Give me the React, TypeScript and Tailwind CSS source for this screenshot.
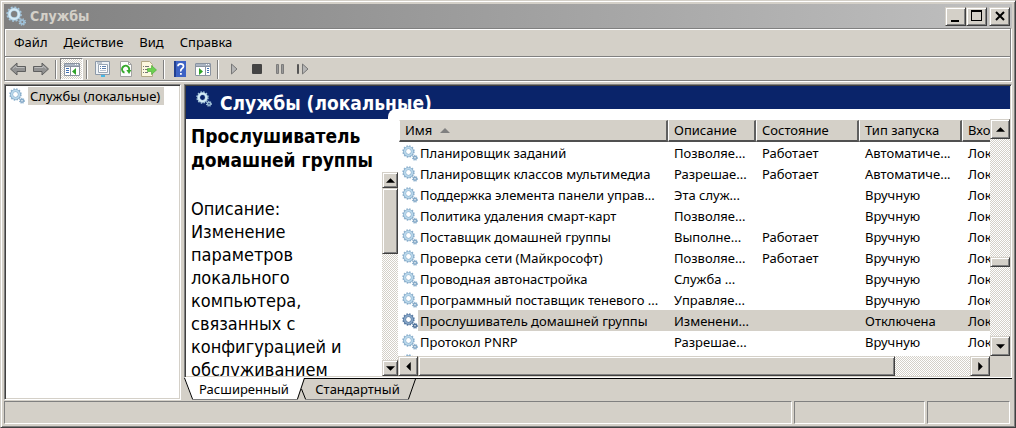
import type { ReactNode } from 'react';
import { clsx } from 'clsx';

interface Service {
  name: string;
  description: string;
  state?: string;
  startup: string;
}

const SERVICES: Service[] = [
  { name: 'Планировщик заданий', description: 'Позволяе...', state: 'Работает', startup: 'Автоматиче...' },
  { name: 'Планировщик классов мультимедиа', description: 'Разрешае...', state: 'Работает', startup: 'Автоматиче...' },
  { name: 'Поддержка элемента панели управ...', description: 'Эта служ...', startup: 'Вручную' },
  { name: 'Политика удаления смарт-карт', description: 'Позволяе...', startup: 'Вручную' },
  { name: 'Поставщик домашней группы', description: 'Выполне...', state: 'Работает', startup: 'Вручную' },
  { name: 'Проверка сети (Майкрософт)', description: 'Позволяе...', state: 'Работает', startup: 'Вручную' },
  { name: 'Проводная автонастройка', description: 'Служба ...', startup: 'Вручную' },
  { name: 'Программный поставщик теневого ...', description: 'Управляе...', startup: 'Вручную' },
  { name: 'Прослушиватель домашней группы', description: 'Изменени...', startup: 'Отключена' },
  { name: 'Протокол PNRP', description: 'Разрешае...', startup: 'Вручную' },
];

const SELECTED = 'Прослушиватель домашней группы';

const RAISED
  = 'bg-[#d4d0c8] border border-t-[#d4d0c8] border-l-[#d4d0c8] border-r-[#404040] border-b-[#404040] shadow-[inset_1px_1px_#fff,inset_-1px_-1px_#808080]';
const SUNKEN
  = 'border border-t-[#808080] border-l-[#808080] border-r-white border-b-white shadow-[inset_1px_1px_#404040,inset_-1px_-1px_#d4d0c8]';
const DITHER
  = 'bg-[repeating-conic-gradient(#fff_0_25%,#d4d0c8_0_50%)] bg-[length:2px_2px]';
const UI_TEXT = "font-['Noto_Sans','DejaVu_Sans_Condensed',sans-serif] text-[13px]";

interface GearsProps {
  className?: string;
  tone?: 'light' | 'dark' | 'pale';
}

const GEAR_TONES = {
  light: { teeth: '#8fb3cf', ring: '#b9d8ec', edge: '#86aac8' },
  dark: { teeth: '#5f82aa', ring: '#86a6c8', edge: '#4f7199' },
  pale: { teeth: '#a9c9de', ring: '#d5ebf6', edge: '#9dbfd6' },
};

function Gears({ className, tone = 'light' }: GearsProps) {
  const { teeth, ring, edge } = GEAR_TONES[tone];
  return (
    <svg viewBox="0 0 16 16" className={clsx('shrink-0', className)} fill="none" aria-hidden="true">
      <circle cx="6.5" cy="6.5" r="5.3" stroke={teeth} strokeWidth="1.8" strokeDasharray="1.5 1.275" />
      <circle cx="6.5" cy="6.5" r="3.9" stroke={edge} strokeWidth="2.9" />
      <circle cx="6.5" cy="6.5" r="3.8" stroke={ring} strokeWidth="1.8" />
      <circle cx="13" cy="12.8" r="2.4" stroke={teeth} strokeWidth="1.2" strokeDasharray="1 0.885" />
      <circle cx="13" cy="12.8" r="1.5" stroke={edge} strokeWidth="1.5" />
    </svg>
  );
}

function Arrow({ direction }: { direction: 'up' | 'down' | 'left' | 'right' }) {
  const paths = {
    up: 'M4 0L8 4H0Z',
    down: 'M0 0H8L4 4Z',
    left: 'M4 0V8L0 4Z',
    right: 'M0 0L4 4L0 8Z',
  };
  const vertical = direction === 'up' || direction === 'down';
  return (
    <svg
      viewBox={vertical ? '0 0 8 4' : '0 0 4 8'}
      className={vertical ? 'h-[5px] w-[9px]' : 'h-[9px] w-[5px]'}
      aria-hidden="true"
    >
      <path d={paths[direction]} fill="#000" />
    </svg>
  );
}

function ScrollButton({ direction, label, small }: { direction: 'up' | 'down' | 'left' | 'right'; label: string; small?: boolean }) {
  return (
    <button
      type="button"
      aria-label={label}
      className={clsx('flex shrink-0 items-center justify-center', small ? 'size-4' : 'size-5', RAISED)}
    >
      <Arrow direction={direction} />
    </button>
  );
}

function ToolButton({ label, active, children }: { label: string; active?: boolean; children: ReactNode }) {
  return (
    <button
      type="button"
      aria-label={label}
      className={clsx(
        'flex h-[22px] w-[23px] items-center justify-center',
        active && 'border border-t-[#808080] border-l-[#808080] border-r-white border-b-white',
        active && DITHER,
      )}
    >
      <svg viewBox="0 0 16 16" className="size-4 shrink-0" fill="none" aria-hidden="true">
        {children}
      </svg>
    </button>
  );
}

function Separator() {
  return <span className="mx-[3px] h-[19px] w-[2px] border-l border-[#808080] bg-white" />;
}

function ConsoleGlyph({ flipped }: { flipped?: boolean }) {
  return (
    <>
      <path d="M0 2h16v13H0z" fill="#fff" />
      <path d="M0.5 2.5h15v12h-15z" stroke="#8a93a0" />
      <path d="M1 3h14v2H1z" fill="#aab4c2" />
      <path d="M11 3h1v1h-1zM13 3h1v1h-1z" fill="#fff" />
      <path d="M1 5.5h14" stroke="#8a93a0" />
      {flipped
        ? (
            <>
              <path d="M10.500 6v8" stroke="#8a93a0" />
              <path d="M12 7.500h2M12 9.500h2M12 11.500h2" stroke="#3f6fb5" />
              <path d="M4 7l4 3.500-4 3.500z" fill="#2fa32a" />
            </>
          )
        : (
            <>
              <path d="M6.500 6v8" stroke="#8a93a0" />
              <path d="M2 7.500h3M2 9.500h3M2 11.500h3" stroke="#3f6fb5" />
              <path d="M12 7l-4 3.500 4 3.500z" fill="#2fa32a" />
            </>
          )}
    </>
  );
}

function Toolbar() {
  return (
    <div role="toolbar" className="flex h-[22px] items-center">
      <ToolButton label="Назад">
        <path d="M0.500 8L7 2V5.500h8.500v5H7V14z" fill="#929292" stroke="#5f5f5f" strokeLinejoin="round" />
        <path d="M3 7.500L6 5v1.500h8.500" stroke="#bcbcbc" />
      </ToolButton>
      <ToolButton label="Вперёд">
        <path d="M15.500 8L9 2V5.500H0.500v5H9V14z" fill="#929292" stroke="#5f5f5f" strokeLinejoin="round" />
        <path d="M1.500 6.500H10V5l3 2.500" stroke="#bcbcbc" />
      </ToolButton>
      <Separator />
      <ToolButton label="Показать дерево консоли" active>
        <ConsoleGlyph />
      </ToolButton>
      <Separator />
      <ToolButton label="Свойства">
        <path d="M0.500 0.500h14v13h-14z" fill="#eef2f6" stroke="#8c99a8" />
        <path d="M3.500 3.500h9v8h-9z" fill="#fff" stroke="#9aa6b5" />
        <path d="M2 2h5" stroke="#8c99a8" />
        <path d="M5 5.500h1M7 5.500h4M5 7.500h1M7 7.500h4" stroke="#5b7fae" />
        <path d="M5 9.500h6" stroke="#b8c2ce" />
        <path d="M6 14h4v2H6z" fill="#45b8e6" />
      </ToolButton>
      <ToolButton label="Обновить">
        <path d="M2.500 0.500h8l3 3v12h-11z" fill="#fdfdfd" stroke="#a2a2a2" />
        <path d="M10.500 0.500v3h3" stroke="#a2a2a2" />
        <path d="M6.500 11.700A3.600 3.600 0 1 1 11 9.500" stroke="#35a92c" strokeWidth="1.900" />
        <path d="M8.300 9h5l-2.200 4z" fill="#35a92c" />
      </ToolButton>
      <ToolButton label="Экспортировать список">
        <path d="M0.500 0.500h8l3 3v12h-11z" fill="#fdf8df" stroke="#b3a987" />
        <path d="M2 5.500h1M4 5.500h4M2 8.500h1M4 8.500h3M2 11.500h1M4 11.500h3" stroke="#777" />
        <path d="M6.500 7.500h4v-3l5 4.500-5 4.500v-3h-4z" fill="#6bd04f" stroke="#45a834" strokeWidth=".6" />
      </ToolButton>
      <Separator />
      <ToolButton label="Справка">
        <path d="M2 0h12v16H2z" fill="#3c62c4" />
        <path d="M2 0h2v16H2z" fill="#23408f" />
        <path d="M6 5.200Q6 2.800 8.700 2.800T11.500 5.200Q11.500 6.500 10 7.500T8.800 10.500" stroke="#fff" strokeWidth="1.700" />
        <path d="M8 12h1.800v1.800H8z" fill="#fff" />
      </ToolButton>
      <ToolButton label="Показать область действий">
        <ConsoleGlyph flipped />
      </ToolButton>
      <Separator />
      <ToolButton label="Запуск службы">
        <path d="M5.500 3v10l5.500-5z" fill="#b5b5b5" stroke="#777" />
      </ToolButton>
      <ToolButton label="Остановка службы">
        <rect x="3" y="3" width="10" height="10" rx="1" fill="#444" />
      </ToolButton>
      <ToolButton label="Приостановка службы">
        <path d="M4.500 3.500h2v9h-2zM9.500 3.500h2v9h-2z" fill="#999" stroke="#7c7c7c" />
      </ToolButton>
      <ToolButton label="Перезапуск службы">
        <path d="M2.500 3.500h1v9h-1z" fill="#777" stroke="#555" />
        <path d="M7.500 3v10l5.500-5z" fill="#b5b5b5" stroke="#777" />
      </ToolButton>
    </div>
  );
}

function TitleBar() {
  const button = clsx('flex h-[19px] w-[21px] items-center justify-center', RAISED);
  return (
    <header className="flex h-6 shrink-0 items-center bg-linear-to-r from-[#808080] to-[#c0c0c0] pr-[2px] pl-[2px]">
      <Gears className="size-5" tone="pale" />
      <h1 className="ml-1 flex-1 text-[14px] font-bold text-[#d4d0c8]">Службы</h1>
      <button type="button" aria-label="Свернуть" className={button}>
        <svg viewBox="0 0 12 12" className="size-3" aria-hidden="true"><path d="M1 10h8v2H1z" /></svg>
      </button>
      <button type="button" aria-label="Развернуть" className={button}>
        <svg viewBox="0 0 12 12" className="size-3" aria-hidden="true"><path d="M0 0h11v11H0zM1 2v8h9V2z" fillRule="evenodd" /></svg>
      </button>
      <button type="button" aria-label="Закрыть" className={clsx('ml-[2px]', button)}>
        <svg viewBox="0 0 12 12" className="size-3" aria-hidden="true"><path d="M2 2l8 8M10 2l-8 8" stroke="#000" strokeWidth="2" /></svg>
      </button>
    </header>
  );
}

function ServiceTable() {
  const head = 'overflow-hidden whitespace-nowrap border-t border-l border-t-[#d4d0c8] border-l-white border-r-2 border-r-[#606060] border-b-2 border-b-[#505050] bg-[#d4d0c8] pl-[5px] text-left font-normal';
  return (
    <table className={clsx('w-[700px] table-fixed border-separate border-spacing-0 leading-[19px]', UI_TEXT)}>
      <colgroup>
        <col className="w-[269px]" />
        <col className="w-[88px]" />
        <col className="w-[103px]" />
        <col className="w-[103px]" />
        <col />
      </colgroup>
      <thead>
        <tr className="h-[22px]">
          <th className={head} aria-sort="ascending">
            Имя
            <svg viewBox="0 0 10 5" className="mb-[3px] ml-2 inline h-[5px] w-[10px]" aria-hidden="true"><path d="M5 0l5 5H0z" fill="#808080" /></svg>
          </th>
          <th className={head}>Описание</th>
          <th className={head}>Состояние</th>
          <th className={head}>Тип запуска</th>
          <th className={head}>Вхо</th>
        </tr>
      </thead>
      <tbody>
        {SERVICES.map((service) => {
          const selected = service.name === SELECTED;
          const cell = clsx('whitespace-nowrap pt-px pl-[6px]', selected && 'bg-[#d4d0c8]');
          return (
            <tr key={service.name} aria-selected={selected} className="h-[21px]">
              <td>
                <div className="flex items-center pl-[3px]">
                  <Gears className="size-4" tone={selected ? 'dark' : 'light'} />
                  <span className={clsx('flex-1 whitespace-nowrap pt-px pl-[2px] leading-[20px]', selected && 'bg-[#d4d0c8]')}>{service.name}</span>
                </div>
              </td>
              <td className={cell}>{service.description}</td>
              <td className={cell}>{service.state}</td>
              <td className={cell}>{service.startup}</td>
              <td className={cell}>Лок</td>
            </tr>
          );
        })}
        <tr>
          <td className="pt-[2px] pl-[3px]"><Gears className="size-4" /></td>
        </tr>
      </tbody>
    </table>
  );
}

function DetailsPane() {
  return (
    <section className="flex w-[212px] shrink-0 flex-col">
      <h3 className="px-[5px] pt-[5px] text-[19px] leading-[24px] font-bold">Прослушиватель домашней группы</h3>
      <div className="flex min-h-0 flex-1">
        <div className="min-w-0 flex-1 overflow-hidden pt-[25px] pl-[5px] text-[18px] leading-[23px]">
          <p>Описание:</p>
          <p>Изменение параметров локального компьютера, связанных с конфигурацией и обслуживанием</p>
        </div>
        <div className={clsx('flex w-4 flex-col', DITHER)}>
          <ScrollButton direction="up" label="Описание вверх" small />
          <div className={clsx('h-[66px]', RAISED)} />
          <div className="flex-1" />
          <ScrollButton direction="down" label="Описание вниз" small />
        </div>
      </div>
    </section>
  );
}

function ListPane() {
  return (
    <section className="flex min-w-0 flex-1 flex-col">
      <div className="flex min-h-0 flex-1">
        <div className="min-w-0 flex-1 overflow-hidden pt-px pl-px">
          <ServiceTable />
        </div>
        <div className={clsx('flex w-5 flex-col', DITHER)}>
          <ScrollButton direction="up" label="Список вверх" />
          <div className="grow-[119]" />
          <div className={clsx('h-[10px] shrink-0', RAISED)} />
          <div className="grow-[69]" />
          <ScrollButton direction="down" label="Список вниз" />
        </div>
      </div>
      <div className="flex h-5 shrink-0 bg-[#d4d0c8]">
        <div className={clsx('flex flex-1', DITHER)}>
          <ScrollButton direction="left" label="Список влево" />
          <div className={clsx('grow-[476]', RAISED)} />
          <div className="grow-[75]" />
          <ScrollButton direction="right" label="Список вправо" />
        </div>
        <div className="w-5" />
      </div>
    </section>
  );
}

function ViewTabs() {
  return (
    <div role="tablist" className={clsx('flex h-[22px] shrink-0 leading-[21px]', UI_TEXT)}>
      <button type="button" role="tab" aria-selected="true" className="relative w-[120px]">
        <svg viewBox="0 0 120 22" className="absolute inset-0 overflow-visible" fill="none" aria-hidden="true">
          <path d="M0 0H120L113 21H8Z" fill="#fff" />
          <path d="M0.500 0L8.500 21M120.500 0L113.500 21" stroke="#000" />
          <path d="M8 21.500h106" stroke="#808080" />
        </svg>
        <span className="relative">Расширенный</span>
      </button>
      <button type="button" role="tab" aria-selected="false" className="relative w-[112px] border-t border-black pr-[5px]">
        <svg viewBox="0 0 112 21" className="absolute inset-0 overflow-visible" fill="none" aria-hidden="true">
          <path d="M-2.500 10L1.500 20M111.500 0L104.500 20" stroke="#000" />
          <path d="M1 20.500h104" stroke="#808080" />
        </svg>
        <span className="relative">Стандартный</span>
      </button>
      <div className="flex-1 border-t border-black" />
    </div>
  );
}

export default function App() {
  const statusCell = 'border border-t-[#808080] border-l-[#808080] border-r-white border-b-white';
  return (
    <div className="flex h-screen flex-col overflow-hidden border border-t-[#d4d0c8] border-r-[#404040] border-b-[#404040] border-l-[#d4d0c8] bg-[#d4d0c8] p-[3px] font-['DejaVu_Sans_Condensed','DejaVu_Sans',sans-serif] text-black shadow-[inset_1px_1px_#fff,inset_-1px_-1px_#808080]">
      <TitleBar />
      <div className="mr-px shrink-0 border border-[#808080] shadow-[inset_1px_1px_#fff,1px_1px_#fff]">
        <nav className={clsx('flex h-7 items-center gap-4 border-b border-[#808080] pl-[9px]', UI_TEXT)}>
          {['Файл', 'Действие', 'Вид', 'Справка'].map(item => (
            <button key={item} type="button">{item}</button>
          ))}
        </nav>
        <div className="border-t border-white pl-px">
          <Toolbar />
        </div>
      </div>
      <main className="mt-[3px] flex min-h-0 flex-1 gap-[3px]">
        <aside className={clsx('w-[177px] shrink-0 bg-white p-[2px]', SUNKEN)}>
          <div className="flex items-center gap-[3px] pl-[2px]">
            <Gears className="size-4" />
            <span className={clsx('bg-[#d4d0c8] pr-1 pl-[2px] leading-[18px] whitespace-nowrap', UI_TEXT)}>Службы (локальные)</span>
          </div>
        </aside>
        <div className="flex min-w-0 flex-1 flex-col">
          <div className={clsx('flex min-h-0 flex-1 flex-col bg-white p-px', SUNKEN)}>
            <div className="relative h-[33px] shrink-0 bg-[#0a246a]">
              <div className="flex items-center gap-2 pl-[10px]">
                <Gears className="mb-1 size-4" tone="pale" />
                <h2 className="pt-[5px] text-[19px] leading-[24px] font-bold text-white">Службы (локальные)</h2>
              </div>
              <div className="absolute right-0 bottom-0 left-[202px] h-[10px] rounded-tl-[8px] bg-white" />
            </div>
            <div className="flex min-h-0 flex-1">
              <DetailsPane />
              <ListPane />
            </div>
          </div>
          <ViewTabs />
        </div>
      </main>
      <footer className="mt-px flex h-[23px] shrink-0 gap-[2px] pr-[2px]">
        <div className={clsx('flex-1', statusCell)} />
        <div className={clsx('w-[131px]', statusCell)} />
        <div className={clsx('w-[83px]', statusCell)} />
      </footer>
    </div>
  );
}
